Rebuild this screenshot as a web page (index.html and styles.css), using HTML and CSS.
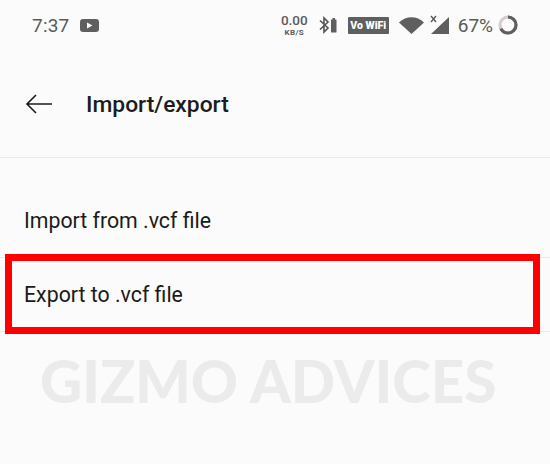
FILE: index.html
```html
<!DOCTYPE html>
<html lang="en">
<head>
<meta charset="utf-8">
<title>Import/export</title>
<link rel="stylesheet" href="styles.css">
</head>
<body>
<div class="screen">
  <div class="status">
    <div class="status-left">
      <span class="time">7:37</span>
      <svg class="yt" width="19" height="13" viewBox="0 0 19 13"><rect width="19" height="13" rx="3" fill="#5f5f5f"/><path d="M7 3.6 12.5 6.5 7 9.4Z" fill="#fff"/></svg>
    </div>
    <div class="status-right">
      <div class="speed"><span class="speed-num">0.00</span><span class="speed-unit">KB/S</span></div>
      <svg class="bt" width="18" height="18" viewBox="0 0 18 18"><path d="M1 4.5 9 12 5 16V2L9 6 1 13.5" fill="none" stroke="#555" stroke-width="1.6"/><rect x="12" y="3.5" width="5.5" height="13" rx=".6" fill="#5f5f5f"/><rect x="13.5" y="2" width="2.5" height="2" fill="#5f5f5f"/></svg>
      <div class="vowifi">Vo WiFi</div>
      <svg class="wifi" width="25" height="20" viewBox="0 0 25 20"><path d="M0 7.5C7 .5 18 .5 25 7.5L12.5 19Z" fill="#5f5f5f"/></svg>
      <svg class="signal" width="19" height="20" viewBox="0 0 19 20"><path d="M19 2V19H1Z" fill="#5f5f5f"/><path d="M1 1 6 7M6 1 1 7" stroke="#555" stroke-width="1.3"/></svg>
      <span class="batt-text">67%</span>
      <svg class="ring" width="20" height="20" viewBox="0 0 20 20"><circle cx="10" cy="10" r="8" fill="none" stroke="#d8cccc" stroke-width="3.2"/><circle cx="10" cy="10" r="8" fill="none" stroke="#5f5f5f" stroke-width="3.2" stroke-dasharray="33.7 50.3" transform="rotate(-90 10 10)"/></svg>
    </div>
  </div>
  <header class="bar">
    <svg class="back" width="28" height="20" viewBox="0 0 28 20"><path d="M27 10H2M11 1 2 10 11 19" fill="none" stroke="#1c1c1c" stroke-width="1.6"/></svg>
    <h1 class="title">Import/export</h1>
  </header>
  <ul class="list">
    <li class="row">Import from .vcf file</li>
    <li class="row">Export to .vcf file</li>
  </ul>
  <div class="highlight"></div>
  <div class="watermark">GIZMO ADVICES</div>
</div>
</body>
</html>
```

FILE: styles.css
```css
* { box-sizing: border-box; }
html, body { margin: 0; padding: 0; }
.screen {
  position: relative;
  width: 550px;
  height: 464px;
  overflow: hidden;
  background: #fbfbfb;
  font-family: Roboto, sans-serif;
  color: #1a1a1a;
}
.status {
  height: 50px;
  display: flex;
  align-items: center;
  justify-content: space-between;
  padding: 0 32px;
  color: #5a5a5a;
}
.status-left { display: flex; align-items: center; gap: 11px; }
.time { font-size: 19px; letter-spacing: .2px; }
.status-right { display: flex; align-items: center; }
.speed { display: flex; flex-direction: column; align-items: center; gap: 2px; margin-right: 11px; }
.speed-num { font-size: 13.5px; font-weight: 500; line-height: 13px; }
.speed-unit { font-size: 8px; font-weight: 700; line-height: 8px; letter-spacing: .4px; }
.bt { margin-right: 11px; }
.vowifi {
  width: 41px;
  height: 17px;
  margin-right: 10px;
  border-radius: 1px;
  background: #5f5f5f;
  color: #fff;
  font-size: 10.5px;
  font-weight: 900;
  line-height: 17px;
  text-align: center;
  white-space: nowrap;
}
.wifi { margin-right: 6px; }
.signal { margin-right: 9px; }
.batt-text { font-size: 19px; margin-right: 5px; }
.bar {
  height: 108px;
  padding: 0 0 0 25px;
  display: flex;
  align-items: center;
  border-bottom: 1px solid #e8e8e8;
}
.back { margin-right: 33px; }
.title { margin: 2px 0 0; font-size: 22.8px; font-weight: 500; color: #1c1c1c; }
.list { list-style: none; margin: 26px 0 0; padding: 0; }
.row {
  height: 74px;
  padding-left: 24px;
  display: flex;
  align-items: center;
  font-size: 21.3px;
  border-bottom: 1px solid #e8e8e8;
}
.highlight {
  position: absolute;
  left: 5px;
  top: 254px;
  width: 535px;
  height: 80px;
  border: 7px solid #ff0000;
}
.watermark {
  position: absolute;
  left: 40px;
  top: 346px;
  font-family: Lato, sans-serif;
  font-weight: 900;
  font-size: 58.3px;
  line-height: 68px;
  white-space: nowrap;
  color: #ebebeb;
}
```
